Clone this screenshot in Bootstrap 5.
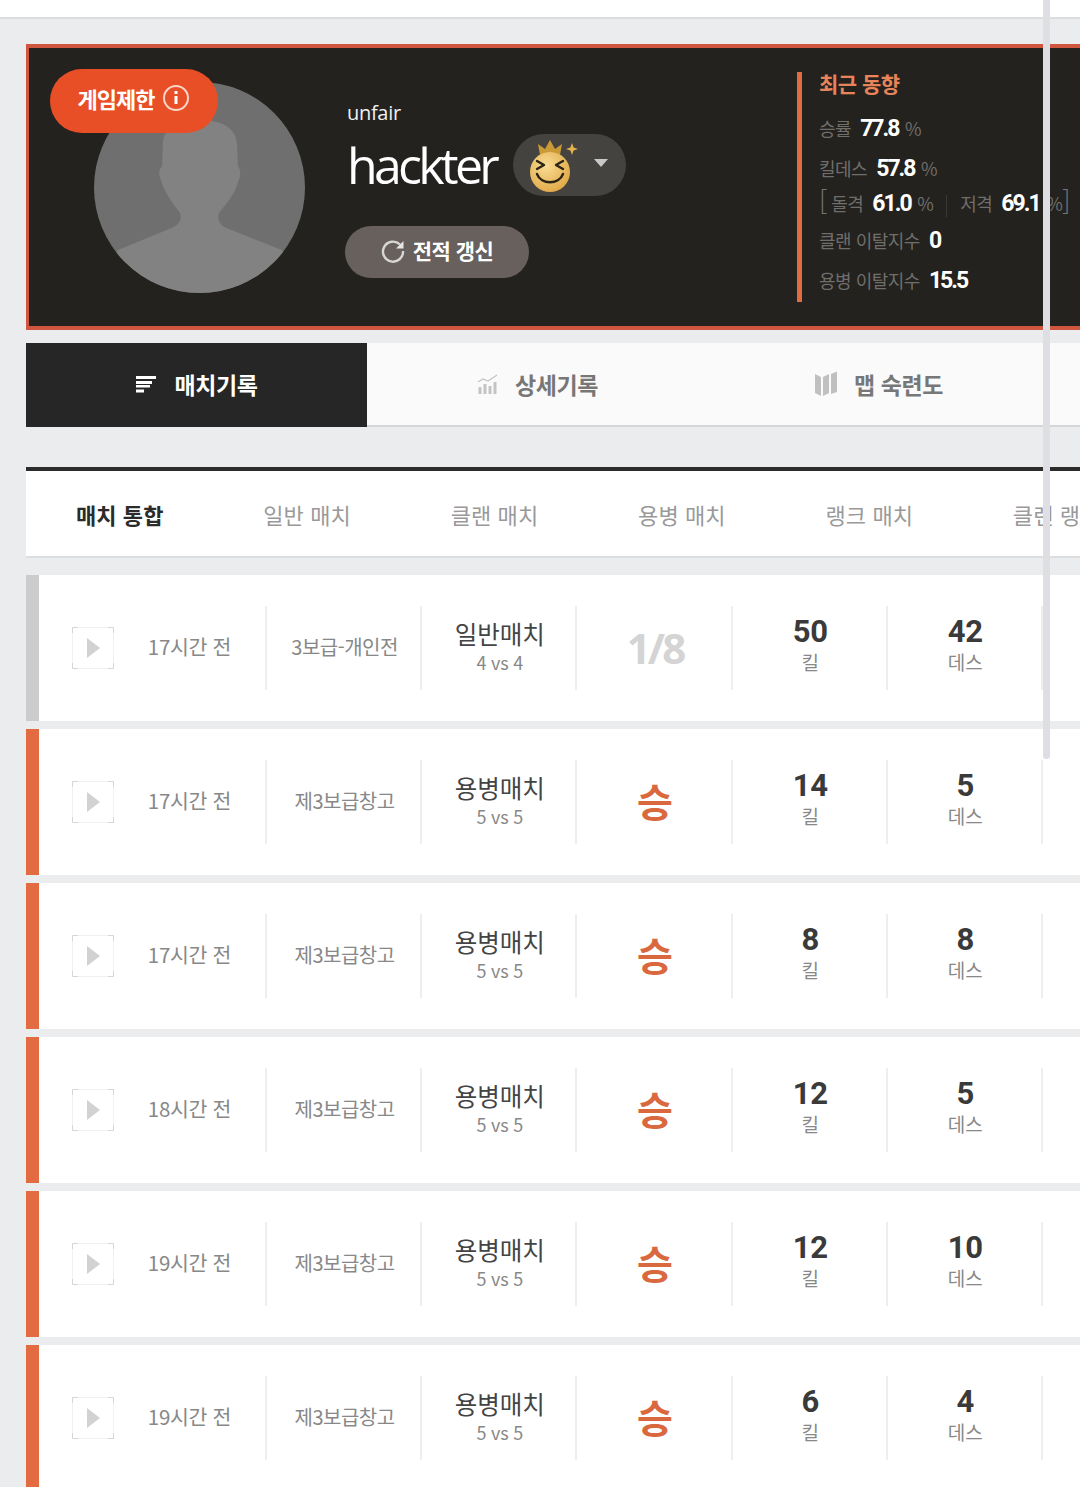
<!DOCTYPE html>
<html lang="ko">
<head>
    <title>전적</title>
    <meta charset="UTF-8">
    <meta name="viewport" content="width=device-width, initial-scale=1.0">
    <link href="https://cdn.jsdelivr.net/npm/bootstrap@5.3.2/dist/css/bootstrap.min.css" rel="stylesheet">
    <style>
        :root {
            --page-bg: #ebecee;
            --accent: #e36b42;
            --panel: #23221f;
        }

        html, body {
            height: 1487px;
            overflow: hidden;
        }

        body {
            background-color: var(--page-bg);
            font-family: "Noto Sans CJK KR", "Noto Sans", sans-serif;
            color: #888;
        }

        .num {
            font-family: Roboto, "Liberation Sans", sans-serif;
            font-weight: 700;
        }

        .top-strip {
            height: 19px;
            background: #fff;
            border-bottom: 2px solid #dcdddf;
        }

        .page-body {
            width: 1340px;
            margin-left: 26px;
            padding-top: 25px;
        }

        /* profile panel */
        .profile-panel {
            height: 286px;
            background: var(--panel);
            border: 3px solid #d0563f;
            border-width: 4px 3px;
        }

        .avatar-wrap {
            width: 211px;
            height: 211px;
            margin-left: 65px;
            margin-top: 1px;
        }

        .ban-pill {
            position: absolute;
            left: -44px;
            top: -13px;
            width: 168px;
            height: 64px;
            padding-bottom: 6px;
            background: #e94f27;
            border-radius: 32px;
            color: #fff;
            font-size: 22px;
            font-weight: 700;
            letter-spacing: -1px;
        }

        .info-col {
            width: 492px;
            padding-left: 42px;
        }

        .clan-name {
            color: #f1f1f1;
            font-family: "Open Sans", sans-serif;
            font-size: 20px;
            line-height: 26px;
            margin-top: 4px;
            letter-spacing: -.3px;
        }

        .name-row {
            margin-top: 8px;
        }

        .player-name {
            color: #fff;
            font-family: "Open Sans", sans-serif;
            font-size: 50px;
            line-height: 62px;
            letter-spacing: -3.700px;
        }

        .tier-pill {
            width: 113px;
            height: 62px;
            margin-left: 17px;
            background: #45433f;
            border-radius: 31px;
        }

        .tier-face {
            margin-left: 16px;
            margin-top: 2px;
        }

        .caret-down {
            width: 0;
            height: 0;
            margin-left: 13px;
            margin-bottom: 4px;
            border-left: 7px solid transparent;
            border-right: 7px solid transparent;
            border-top: 8px solid #c9c9c9;
        }

        .refresh-btn {
            width: 184px;
            height: 52px;
            margin-top: 30px;
            margin-left: -2px;
            padding: 0 0 3px;
            background: #67605d;
            border: 0;
            border-radius: 26px;
            color: #fff;
            font-size: 21px;
            font-weight: 700;
            letter-spacing: -.5px;
        }

        .stats-col {
            height: 230px;
            margin-top: -1px;
            padding-left: 17px;
            border-left: 5px solid var(--accent);
            font-size: 18px;
            color: #6f6e6b;
            letter-spacing: -.5px;
            white-space: nowrap;
        }

        .stats-title {
            color: #e8845a;
            font-size: 21px;
            font-weight: 700;
            line-height: 26px;
            margin-top: -2px;
            margin-bottom: 16px;
        }

        .stat-line {
            height: 32px;
            line-height: 32px;
        }

        .stat-line b {
            font-family: Roboto, "Liberation Sans", sans-serif;
            font-size: 23px;
            font-weight: 700;
            color: #fff;
            letter-spacing: -2px;
            margin: 0 2px 0 9px;
        }

        .bracket {
            font-size: 26px;
            font-weight: 300;
            color: #777;
        }

        .stat-sep {
            display: inline-block;
            width: 1px;
            height: 22px;
            margin: 0 13px;
            background: #3a3936;
            vertical-align: middle;
        }

        /* main tabs */
        .main-tabs {
            height: 84px;
            margin-top: 13px;
            background: #fafafa;
            border-bottom: 2px solid #d5d6d8;
        }

        .main-tabs .nav-link {
            width: 341px;
            height: 84px;
            padding: 0 0 2px;
            color: #777;
            font-size: 23px;
            font-weight: 700;
            letter-spacing: -.4px;
        }

        .main-tabs .nav-link.active {
            background: #262626;
            color: #fff;
        }

        .tab-gap {
            margin-left: 1px;
        }

        /* sub tabs */
        .sub-tabs {
            height: 91px;
            margin-top: 40px;
            background: #fff;
            border-top: 4px solid #2b2b2b;
            border-bottom: 2px solid #dcdddf;
        }

        .sub-tabs .nav-link {
            width: 187.4px;
            height: 85px;
            padding: 2px 0 0;
            color: #999;
            font-size: 22px;
            letter-spacing: .1px;
        }

        .sub-tabs .nav-link.active {
            color: #2b2b2b;
            font-weight: 700;
        }

        /* match rows */
        .match-list {
            margin-top: 17px;
        }

        .match-row {
            height: 146px;
            margin-bottom: 8px;
            padding: 31px 0 31px 0;
            background: #fff;
            border-left: 13px solid var(--accent);
        }

        .match-row.is-grey {
            border-left-color: #cccccc;
        }

        .cell {
            width: 155.2px;
            height: 84px;
            padding-left: 2px;
            border-right: 2px solid #eeeeee;
            text-align: center;
        }

        .cell-first {
            width: 228px;
            padding-left: 33px;
        }

        .ago {
            flex: 1;
            font-size: 20.500px;
            letter-spacing: -.3px;
            padding-bottom: 4px;
        }

        .map-name {
            font-size: 20px;
            letter-spacing: -.5px;
            padding-bottom: 2px;
        }

        .cell-stack {
            padding-bottom: 8px;
        }

        .cell-mode {
            padding-bottom: 3px;
        }

        .mode-name {
            color: #444;
            font-size: 24.500px;
            line-height: 32px;
        }

        .mode-sub {
            font-size: 18px;
            line-height: 25px;
            letter-spacing: -.2px;
        }

        .rank-text {
            font-family: "Open Sans", sans-serif;
            color: #d4d4d4;
            font-size: 42px;
            font-weight: 700;
            letter-spacing: -3px;
            padding-bottom: 2px;
        }

        .win-text {
            color: #d9683f;
            font-size: 39px;
            font-weight: 700;
            padding-bottom: 4px;
        }

        .stat-num {
            color: #3a3a3a;
            font-size: 31px;
            line-height: 36px;
            letter-spacing: -.3px;
        }

        .stat-label {
            font-size: 19px;
            line-height: 24px;
        }

        .overlay-scrollbar {
            position: absolute;
            left: 1043px;
            top: 0;
            width: 7px;
            height: 759px;
            background: #dfdfe3;
            border-radius: 0 0 3px 3px;
            z-index: 5;
        }
    </style>
</head>
<body>
<div class="overlay-scrollbar"></div>
<div class="top-strip"></div>

<div class="page-body">
    <section class="profile-panel d-flex align-items-center">
        <div class="avatar-wrap position-relative flex-shrink-0">
            <svg width="211" height="211" viewBox="0 0 211 211">
                <defs><clipPath id="avClip"><circle cx="105.5" cy="105.5" r="105.5"/></clipPath></defs>
                <circle cx="105.5" cy="105.5" r="105.5" fill="#6f6f6f"/>
                <path clip-path="url(#avClip)" fill="#828282" d="M69 60C70 46 84 38 105 38C128 38 142 46 143 62L144 84C147 88 147 94 144 100C141 112 132 122 125 131C123 137 125 141 130 145L188 168L211 211H0L24 168L80 145C86 141 88 137 86 131C78 120 70 110 67 98C64 92 65 88 68 84Z"/>
            </svg>
            <div class="ban-pill d-flex align-items-center justify-content-center gap-2">
                <span>게임제한</span>
                <svg width="28" height="28" viewBox="0 0 28 28" fill="none" stroke="#f8d5c8" stroke-width="2">
                    <circle cx="14" cy="14" r="12"/>
                    <path d="M14 12v8" stroke="#fff" stroke-width="3"/>
                    <path d="M14 7v3" stroke="#fff" stroke-width="3"/>
                </svg>
            </div>
        </div>

        <div class="info-col flex-shrink-0">
            <div class="clan-name">unfair</div>
            <div class="name-row d-flex align-items-center">
                <span class="player-name">hackter</span>
                <div class="tier-pill d-flex align-items-center">
                    <svg width="52" height="56" viewBox="0 0 52 56" class="tier-face">
                        <defs>
                            <radialGradient id="faceGold" cx=".4" cy=".35" r=".75">
                                <stop offset="0" stop-color="#f9dc95"/>
                                <stop offset="1" stop-color="#dfa43f"/>
                            </radialGradient>
                        </defs>
                        <path d="M11 17L9 6L16 11L21 2L26 11L33 6L31 17Z" fill="#c99a35"/>
                        <path d="M43 5l1.6 4.400 4.400 1.600-4.400 1.600-1.600 4.400-1.600-4.400-4.400-1.600 4.400-1.600z" fill="#e3b34e"/>
                        <ellipse cx="21" cy="34" rx="20" ry="20" fill="url(#faceGold)"/>
                        <g fill="none" stroke="#2c2415" stroke-width="2.400" stroke-linecap="round" stroke-linejoin="round">
                            <path d="M8 23l7 4-7 4"/>
                            <path d="M34 23l-7 4 7 4"/>
                            <path d="M8 36c4 11 22 11 26 0"/>
                        </g>
                    </svg>
                    <span class="caret-down"></span>
                </div>
            </div>
            <button type="button" class="btn refresh-btn d-flex align-items-center justify-content-center gap-2">
                <svg width="24" height="24" viewBox="0 0 24 24" fill="none">
                    <path d="M19 5.500A10 10 0 1 0 22 12" stroke="#d8d6d4" stroke-width="2.400"/>
                    <path d="M22.500 2v7.500H15z" fill="#e8e6e4"/>
                </svg>
                <span>전적 갱신</span>
            </button>
        </div>

        <div class="stats-col">
            <div class="stats-title">최근 동향</div>
            <div class="stat-line mb-2">승률<b>77.8</b> %</div>
            <div class="stat-line">킬데스<b>57.8</b> %</div>
            <div class="stat-line mb-2"><span class="bracket">[</span> 돌격<b>61.0</b> %<span class="stat-sep"></span>저격<b>69.1</b> %<span class="bracket">]</span></div>
            <div class="stat-line mb-2">클랜 이탈지수<b>0</b></div>
            <div class="stat-line">용병 이탈지수<b>15.5</b></div>
        </div>
    </section>

    <ul class="nav main-tabs">
        <li class="nav-item">
            <a class="nav-link active d-flex align-items-center justify-content-center gap-3" href="#">
                <svg width="22" height="20" viewBox="0 0 22 20" fill="#fff">
                    <rect x="1" y="2" width="20" height="3"/>
                    <rect x="1" y="7" width="16" height="3"/>
                    <rect x="1" y="11" width="14" height="2.500"/>
                    <rect x="1" y="15.500" width="8" height="3"/>
                </svg>
                <span class="tab-gap">매치기록</span>
            </a>
        </li>
        <li class="nav-item">
            <a class="nav-link d-flex align-items-center justify-content-center gap-3" href="#">
                <svg width="22" height="22" viewBox="0 0 22 22" fill="#c4c4c4">
                    <rect x="1.500" y="14" width="3" height="7"/>
                    <rect x="6.500" y="11" width="3" height="10"/>
                    <rect x="11.500" y="13" width="3" height="8"/>
                    <rect x="16.500" y="9" width="3" height="12"/>
                    <path d="M1 9l5-3 5 2 9-6" fill="none" stroke="#c4c4c4" stroke-width="1.200"/>
                </svg>
                <span>상세기록</span>
            </a>
        </li>
        <li class="nav-item">
            <a class="nav-link d-flex align-items-center justify-content-center gap-3" href="#">
                <svg width="24" height="26" viewBox="0 0 24 26" fill="#c0c0c0">
                    <path d="M1 3l6 3v19l-6-3z"/>
                    <path d="M9 6l6-3v19l-6 3z"/>
                    <path d="M17 3l6-2.500V21l-6 2z"/>
                </svg>
                <span>맵 숙련도</span>
            </a>
        </li>
    </ul>

    <ul class="nav sub-tabs">
        <li class="nav-item"><a class="nav-link active d-flex align-items-center justify-content-center" href="#">매치 통합</a></li>
        <li class="nav-item"><a class="nav-link d-flex align-items-center justify-content-center" href="#">일반 매치</a></li>
        <li class="nav-item"><a class="nav-link d-flex align-items-center justify-content-center" href="#">클랜 매치</a></li>
        <li class="nav-item"><a class="nav-link d-flex align-items-center justify-content-center" href="#">용병 매치</a></li>
        <li class="nav-item"><a class="nav-link d-flex align-items-center justify-content-center" href="#">랭크 매치</a></li>
        <li class="nav-item"><a class="nav-link d-flex align-items-center justify-content-center" href="#">클랜 랭크</a></li>
    </ul>

    <div class="match-list" id="matchList"></div>
</div>

<script src="https://cdn.jsdelivr.net/npm/bootstrap@5.3.2/dist/js/bootstrap.bundle.min.js"></script>
<script>
    const matches = [
        {ago: '17시간 전', map: '3보급-개인전', mode: '일반매치', size: '4 vs 4', result: '1/8', kill: 50, death: 42, grey: true},
        {ago: '17시간 전', map: '제3보급창고', mode: '용병매치', size: '5 vs 5', result: '승', kill: 14, death: 5},
        {ago: '17시간 전', map: '제3보급창고', mode: '용병매치', size: '5 vs 5', result: '승', kill: 8, death: 8},
        {ago: '18시간 전', map: '제3보급창고', mode: '용병매치', size: '5 vs 5', result: '승', kill: 12, death: 5},
        {ago: '19시간 전', map: '제3보급창고', mode: '용병매치', size: '5 vs 5', result: '승', kill: 12, death: 10},
        {ago: '19시간 전', map: '제3보급창고', mode: '용병매치', size: '5 vs 5', result: '승', kill: 6, death: 4}
    ];

    const center = 'd-flex flex-column align-items-center justify-content-center';

    document.getElementById('matchList').innerHTML = matches.map(m => `
        <div class="match-row d-flex ${m.grey ? 'is-grey' : ''}">
            <div class="cell cell-first d-flex align-items-center">
                <svg width="42" height="42" viewBox="0 0 42 42" class="flex-shrink-0" fill="none">
                    <rect x=".5" y=".5" width="41" height="41" stroke="#f1f1f1"/>
                    <path d="M.5 6V.5H6M36 .5h5.500V6M41.500 36v5.500H36M6 41.500H.5V36" stroke="#d6d6d6"/>
                    <path d="M15 11l13 10-13 10z" fill="#d2d2d2"/>
                </svg>
                <div class="ago">${m.ago}</div>
            </div>
            <div class="cell map-name ${center}">${m.map}</div>
            <div class="cell cell-mode ${center}">
                <div class="mode-name">${m.mode}</div>
                <div class="mode-sub">${m.size}</div>
            </div>
            <div class="cell ${center}">
                <div class="${m.grey ? 'rank-text' : 'win-text'}">${m.result}</div>
            </div>
            <div class="cell cell-stack ${center}">
                <div class="num stat-num">${m.kill}</div>
                <div class="stat-label">킬</div>
            </div>
            <div class="cell cell-stack ${center}">
                <div class="num stat-num">${m.death}</div>
                <div class="stat-label">데스</div>
            </div>
            <div class="cell"></div>
        </div>`).join('');
</script>
</body>
</html>
